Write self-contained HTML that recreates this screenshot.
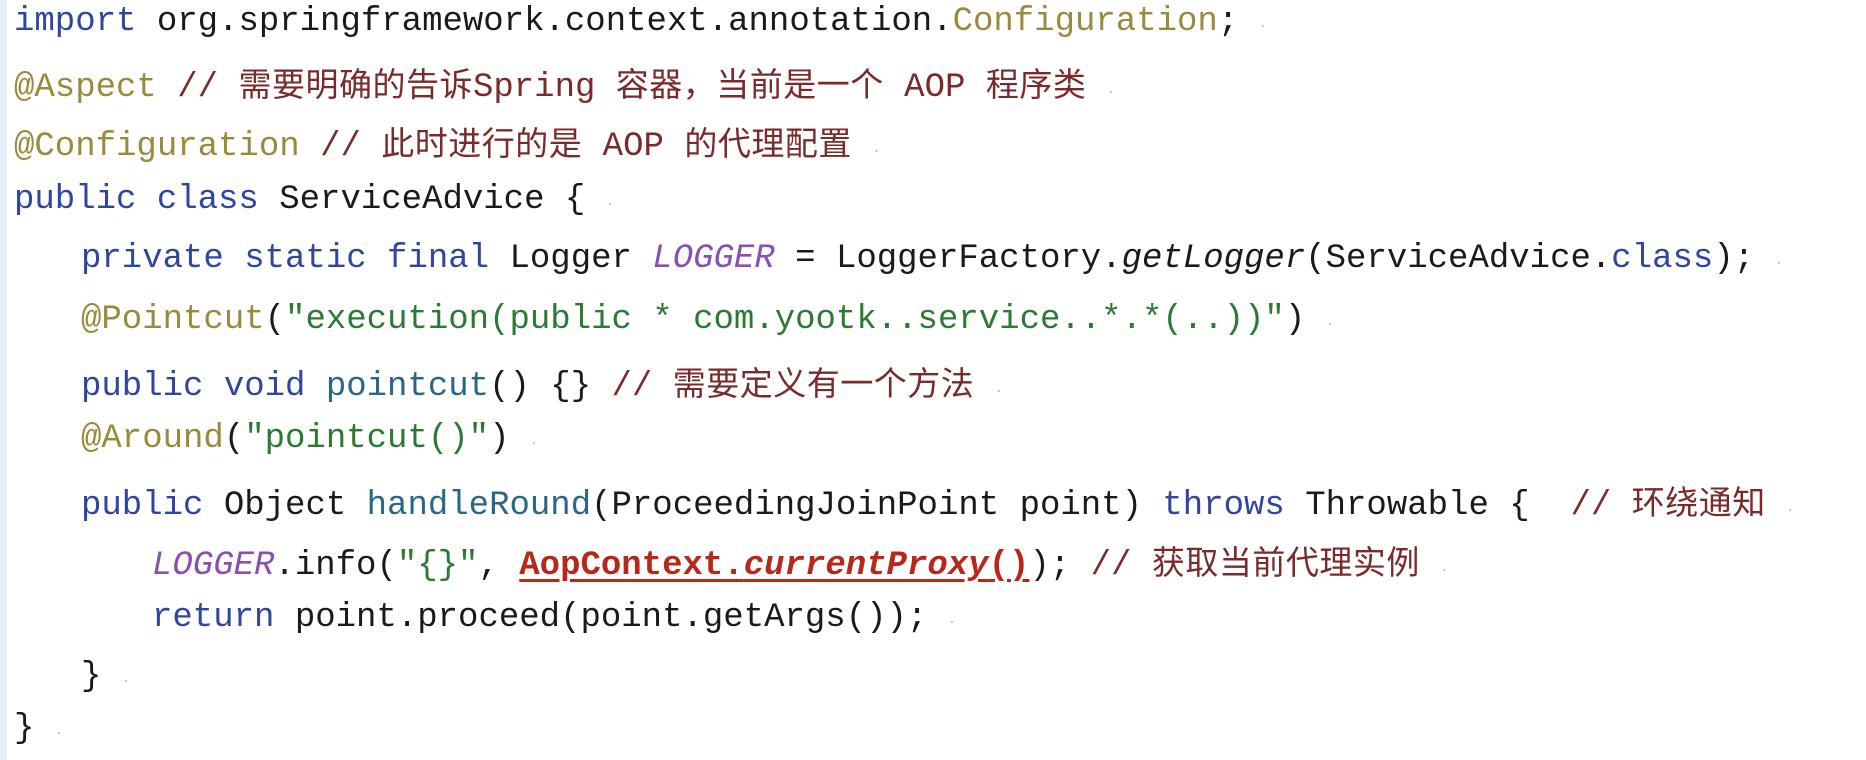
<!DOCTYPE html>
<html><head><meta charset="utf-8"><style>
body{margin:0;width:1866px;height:760px;background:#fff;overflow:hidden;position:relative}
.bar{position:absolute;left:0;top:0;width:7px;height:760px;background:#e6eef8}
.l{position:absolute;white-space:pre;font-family:"Liberation Mono","Noto Sans CJK SC",monospace;font-size:34px;line-height:40px;color:#1a1a1a}
.k{color:#2f46a0}.a{color:#9a8a3c}.c{color:#7a2a2a}.s{color:#2a7a32}.f{color:#8a4fb0;font-style:italic}.m{color:#2a6688}.i{font-style:italic}
.z{font-family:"Noto Sans CJK SC",sans-serif;font-size:33px;letter-spacing:0.5px}
.r{color:#b8281a;font-weight:bold;text-decoration:underline;text-decoration-thickness:3px;text-underline-offset:5px}
.d{color:#bbb;font-size:14px}
</style></head><body>
<div class="bar"></div>
<div class="l" style="left:14px;top:2px"><span class="k">import</span> org.springframework.context.annotation.<span class="a">Configuration</span>; <span class="d">·</span></div>
<div class="l" style="left:14px;top:62px"><span class="a">@Aspect</span> <span class="c">// <span class="z">需要明确的告诉</span>Spring <span class="z">容器，当前是一个</span> AOP <span class="z">程序类</span></span> <span class="d">·</span></div>
<div class="l" style="left:14px;top:121px"><span class="a">@Configuration</span> <span class="c">// <span class="z">此时进行的是</span> AOP <span class="z">的代理配置</span></span> <span class="d">·</span></div>
<div class="l" style="left:14px;top:180px"><span class="k">public class</span> ServiceAdvice { <span class="d">·</span></div>
<div class="l" style="left:81px;top:239px"><span class="k">private static final</span> Logger <span class="f">LOGGER</span> = LoggerFactory.<span class="i">getLogger</span>(ServiceAdvice.<span class="k">class</span>); <span class="d">·</span></div>
<div class="l" style="left:81px;top:300px"><span class="a">@Pointcut</span>(<span class="s">"execution(public * com.yootk..service..*.*(..))"</span>) <span class="d">·</span></div>
<div class="l" style="left:81px;top:361px"><span class="k">public void</span> <span class="m">pointcut</span>() {} <span class="c">// <span class="z">需要定义有一个方法</span></span> <span class="d">·</span></div>
<div class="l" style="left:81px;top:419px"><span class="a">@Around</span>(<span class="s">"pointcut()"</span>) <span class="d">·</span></div>
<div class="l" style="left:81px;top:480px"><span class="k">public</span> Object <span class="m">handleRound</span>(ProceedingJoinPoint point) <span class="k">throws</span> Throwable {  <span class="c">// <span class="z">环绕通知</span></span> <span class="d">·</span></div>
<div class="l" style="left:152px;top:540px"><span class="f">LOGGER</span>.info(<span class="s">"{}"</span>, <span class="r">AopContext.<span class="i">currentProxy</span>()</span>); <span class="c">// <span class="z">获取当前代理实例</span></span> <span class="d">·</span></div>
<div class="l" style="left:152px;top:598px"><span class="k">return</span> point.proceed(point.getArgs()); <span class="d">·</span></div>
<div class="l" style="left:81px;top:657px">} <span class="d">·</span></div>
<div class="l" style="left:14px;top:709px">} <span class="d">·</span></div>
</body></html>
